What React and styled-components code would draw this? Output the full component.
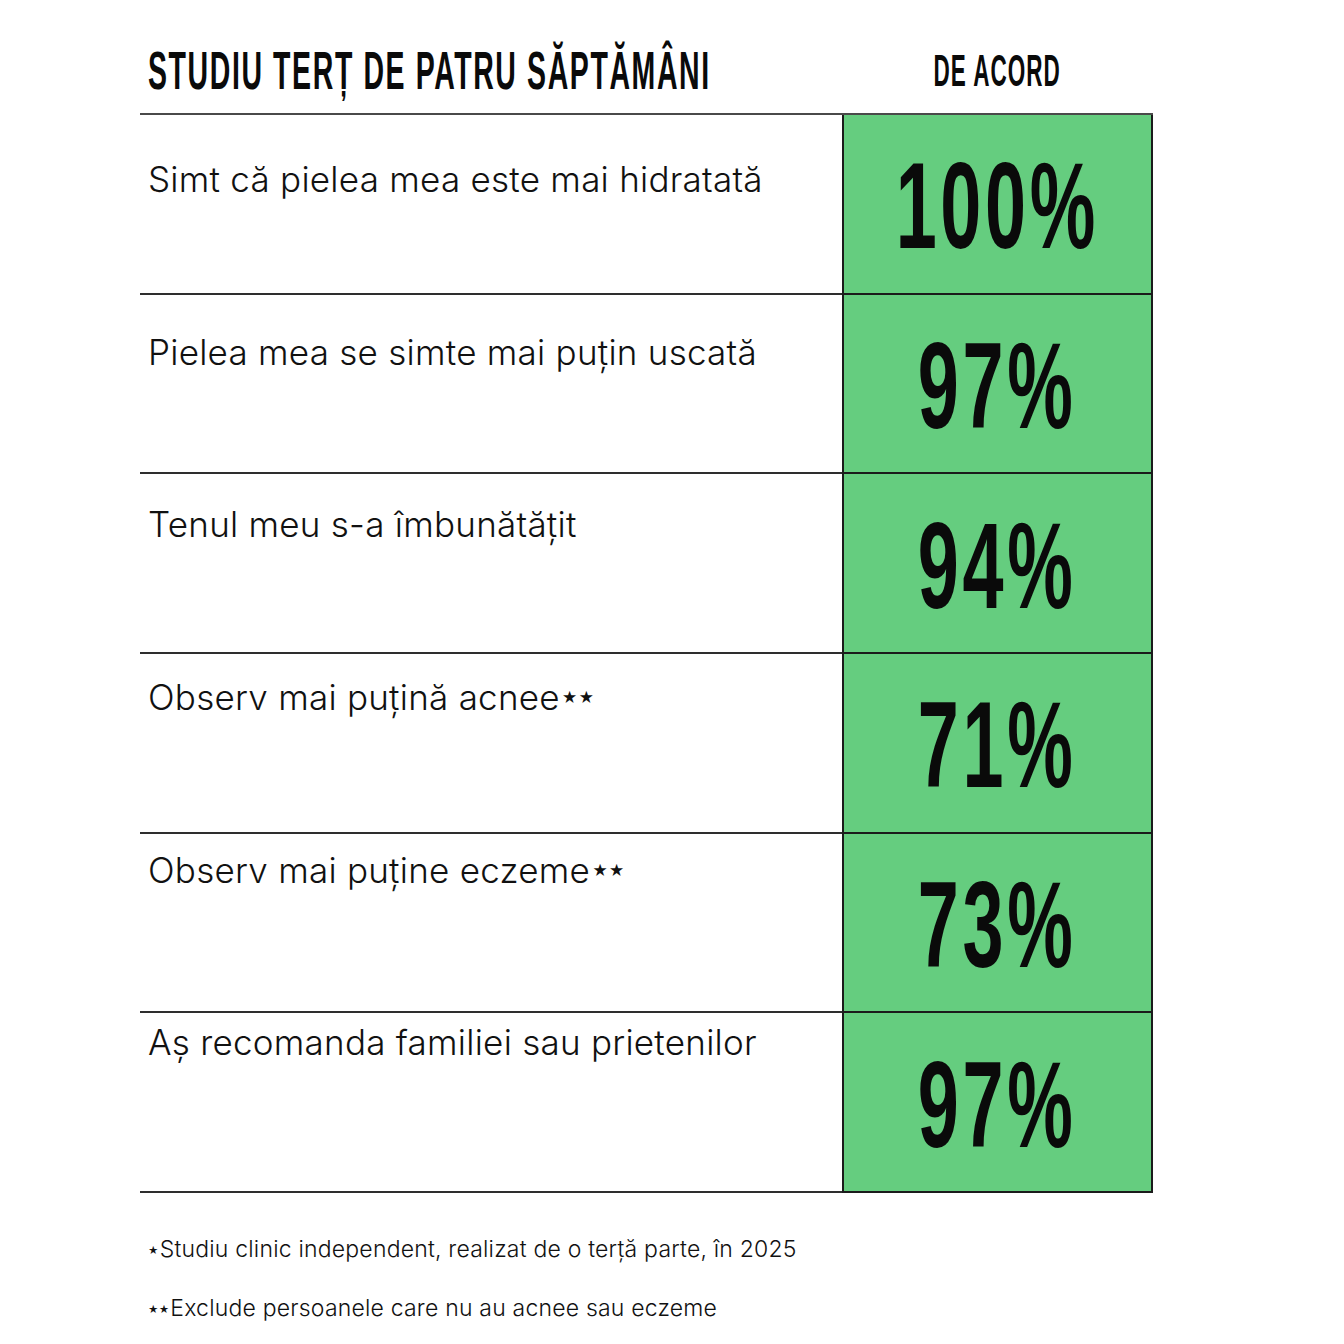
import React from "react";
import styled, { createGlobalStyle } from "styled-components";

const GlobalStyle = createGlobalStyle`
  html, body {
    margin: 0;
    padding: 0;
    background: #fff;
  }
  body {
    font-family: Inter, "Noto Sans", sans-serif;
    color: #111;
  }
`;

const rows = [
  { label: "Simt că pielea mea este mai hidratată", value: "100%" },
  { label: "Pielea mea se simte mai puțin uscată", value: "97%" },
  { label: "Tenul meu s-a îmbunătățit", value: "94%" },
  { label: "Observ mai puțină acnee", stars: "★★", value: "71%" },
  { label: "Observ mai puține eczeme", stars: "★★", value: "73%" },
  { label: "Aș recomanda familiei sau prietenilor", value: "97%" },
];

function App() {
  return (
    <>
      <GlobalStyle />
      <Page>
        <Header>
          <TitleCell>
            <Condensed size={53} scale={0.537} spacing={3}>STUDIU TERȚ DE PATRU SĂPTĂMÂNI</Condensed>
          </TitleCell>
          <AgreeCell>
            <Condensed size={45} scale={0.5} spacing={2} center>DE ACORD</Condensed>
          </AgreeCell>
        </Header>

        <Table>
          {rows.map((row, i) => (
            <Row key={i}>
              <LabelCell offset={43 - i * 7}>
                {row.label}
                {row.stars && <Stars>{row.stars}</Stars>}
              </LabelCell>
              <ValueCell>
                <Condensed size={123} scale={0.6} spacing={6} center>{row.value}</Condensed>
              </ValueCell>
            </Row>
          ))}
        </Table>

        <Notes>
          <Note><SmallStar>★</SmallStar>Studiu clinic independent, realizat de o terță parte, în 2025</Note>
          <Note><SmallStar>★★</SmallStar>Exclude persoanele care nu au acnee sau eczeme</Note>
        </Notes>
      </Page>
    </>
  );
}

// css styles
const Page = styled.div`
  width: 1013px;
  margin-left: 140px;
`;

const Header = styled.div`
  display: grid;
  grid-template-columns: 702px 311px;
  height: 113px;
  align-items: end;
`;

const TitleCell = styled.div`
  padding: 0 0 16px 8px;
  white-space: nowrap;
`;

const AgreeCell = styled.div`
  display: flex;
  justify-content: center;
  padding-bottom: 20px;
`;

const Condensed = styled.div`
  display: inline-block;
  font-family: "Liberation Sans", Arial, sans-serif;
  font-weight: 700;
  font-size: ${props => props.size}px;
  letter-spacing: ${props => props.spacing || 0}px;
  line-height: 1;
  color: #0a0a0a;
  white-space: nowrap;
  transform: scaleX(${props => props.scale});
  transform-origin: ${props => (props.center ? "center" : "left")} center;
  margin: ${props => (props.center ? "0 -200px" : "0")};
`;

const Table = styled.div`
  border-top: 2px solid #4a4a4a;
`;

const Row = styled.div`
  display: grid;
  grid-template-columns: 702px 311px;
  height: 179.7px;
  box-sizing: border-box;
`;

const LabelCell = styled.div`
  border-bottom: 2px solid #2e2e2e;
  padding: ${props => props.offset}px 0 0 8px;
  font-size: 35px;
  font-weight: 300;
  letter-spacing: 0.25px;
  color: #111;
  white-space: nowrap;
`;

const Stars = styled.span`
  font-size: 15px;
  letter-spacing: 1px;
  vertical-align: 7px;
  margin-left: 2px;
`;

const ValueCell = styled.div`
  background: #65cd7f;
  border: 2px solid #1b1b1b;
  border-top: none;
  display: flex;
  align-items: center;
  justify-content: center;
  overflow: hidden;
  padding-top: 4px;
`;

const Notes = styled.div`
  padding: 42px 0 0 8px;
  display: flex;
  flex-direction: column;
  gap: 30px;
`;

const Note = styled.div`
  font-size: 23px;
  font-weight: 300;
  letter-spacing: 0.2px;
  color: #111;
  line-height: 28px;
`;

const SmallStar = styled.span`
  font-size: 10px;
  vertical-align: 3px;
  margin-right: 1px;
`;

export default App;
